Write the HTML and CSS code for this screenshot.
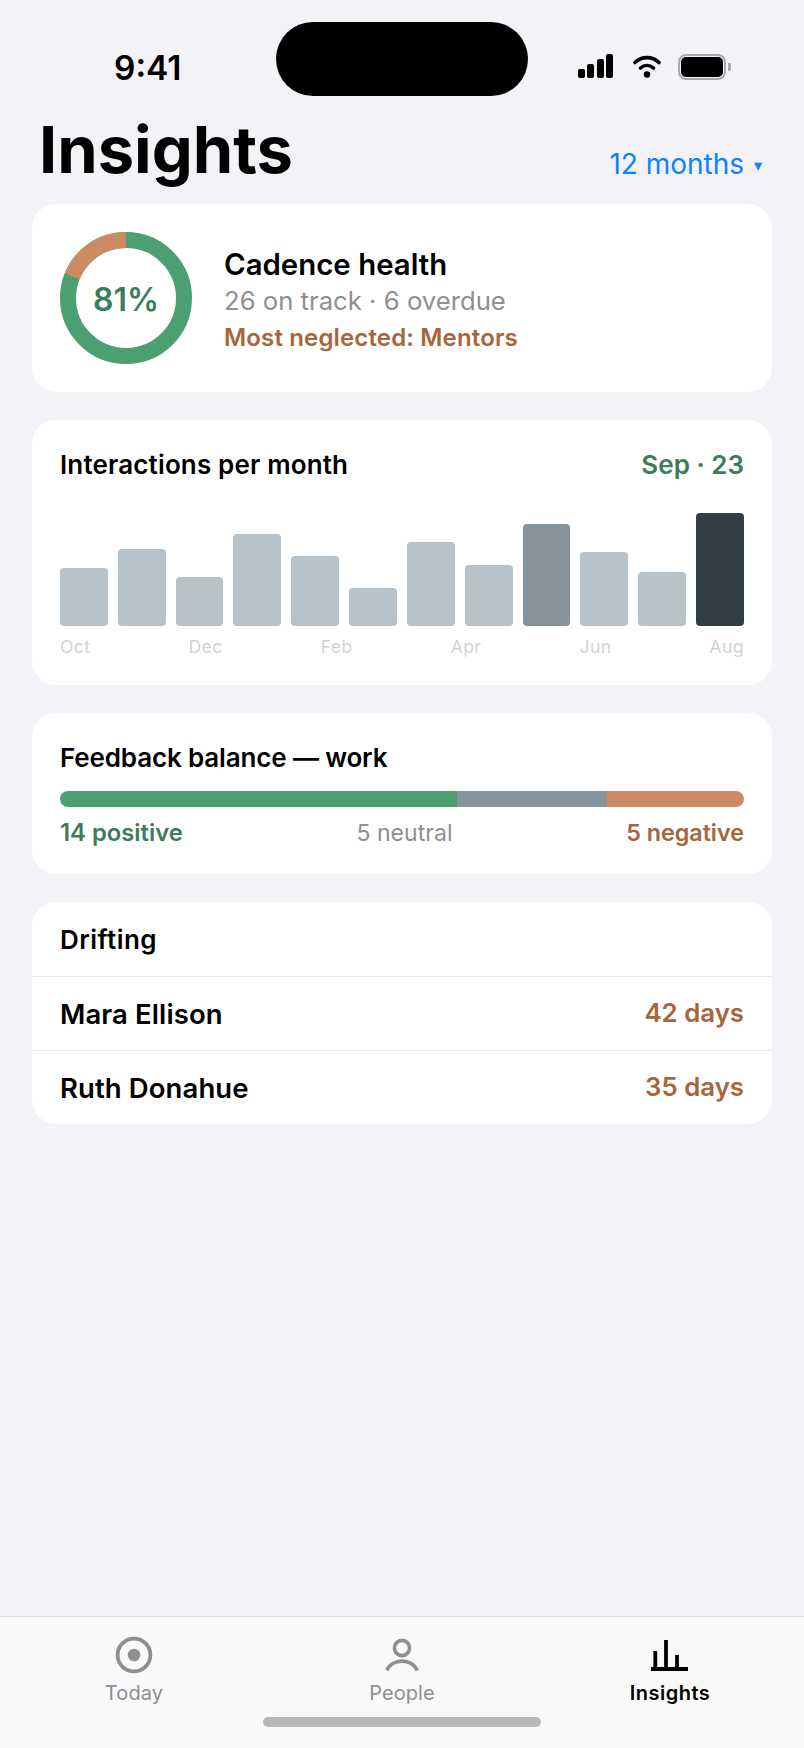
FILE: index.html
```html
<!DOCTYPE html>
<html lang="en">
<head>
    <meta charset="UTF-8">
    <title>Insights</title>
    <link rel="stylesheet" href="styles.css">
</head>
<body>
    <div class="status-bar">
        <div class="time">9:41</div>
        <div class="island"></div>
        <div class="status-icons">
            <div class="signal">
                <span class="signal-1"></span>
                <span class="signal-2"></span>
                <span class="signal-3"></span>
                <span class="signal-4"></span>
            </div>
            <svg class="wifi" width="28" height="24" viewBox="0 0 28 24">
                <path d="M2 8.5C9 2 19 2 26 8.5" fill="none" stroke="#000" stroke-width="3.6" stroke-linecap="round"/>
                <path d="M7.5 14C11.5 10.6 16.5 10.6 20.5 14" fill="none" stroke="#000" stroke-width="3.6" stroke-linecap="round"/>
                <circle cx="14" cy="20.5" r="3.2" fill="#000"/>
            </svg>
            <div class="battery">
                <div class="battery-body"><div class="battery-level"></div></div>
                <div class="battery-nub"></div>
            </div>
        </div>
    </div>

    <div class="page-header">
        <h1>Insights</h1>
        <div class="range">12 months <span class="range-arrow">▾</span></div>
    </div>

    <main class="cards">
        <section class="card health">
            <div class="donut">
                <svg width="132" height="132" viewBox="0 0 132 132">
                    <circle cx="66" cy="66" r="58" fill="none" stroke="#4c9f70" stroke-width="16"/>
                    <circle cx="66" cy="66" r="58" fill="none" stroke="#cc8b62" stroke-width="16" stroke-dasharray="69.2 295.2" stroke-dashoffset="69.2" transform="rotate(-90 66 66)"/>
                </svg>
                <div class="donut-label">81%</div>
            </div>
            <div class="health-text">
                <div class="health-title">Cadence health</div>
                <div class="health-sub">26 on track · 6 overdue</div>
                <div class="health-note">Most neglected: Mentors</div>
            </div>
        </section>

        <section class="card chart">
            <div class="card-head">
                <div class="card-title title-chart">Interactions per month</div>
                <div class="chart-now">Sep · 23</div>
            </div>
            <div class="bars">
                <div class="bar" style="height: 58px"></div>
                <div class="bar" style="height: 77px"></div>
                <div class="bar" style="height: 49px"></div>
                <div class="bar" style="height: 92px"></div>
                <div class="bar" style="height: 70px"></div>
                <div class="bar" style="height: 38px"></div>
                <div class="bar" style="height: 84px"></div>
                <div class="bar" style="height: 61px"></div>
                <div class="bar bar-mid" style="height: 102px"></div>
                <div class="bar" style="height: 74px"></div>
                <div class="bar" style="height: 54px"></div>
                <div class="bar bar-dark" style="height: 113px"></div>
            </div>
            <div class="months">
                <span>Oct</span>
                <span>Dec</span>
                <span>Feb</span>
                <span>Apr</span>
                <span>Jun</span>
                <span>Aug</span>
            </div>
        </section>

        <section class="card balance">
            <div class="card-title title-balance">Feedback balance — work</div>
            <div class="balance-bar">
                <div class="seg-positive" style="width: 397px"></div>
                <div class="seg-neutral" style="width: 150px"></div>
                <div class="seg-negative" style="width: 137px"></div>
            </div>
            <div class="balance-labels">
                <span class="label-positive">14 positive</span>
                <span class="label-neutral">5 neutral</span>
                <span class="label-negative">5 negative</span>
            </div>
        </section>

        <section class="card drifting">
            <div class="drifting-head card-title title-drifting">Drifting</div>
            <div class="drifting-row">
                <span class="drifting-name">Mara Ellison</span>
                <span class="drifting-days">42 days</span>
            </div>
            <div class="drifting-row">
                <span class="drifting-name">Ruth Donahue</span>
                <span class="drifting-days">35 days</span>
            </div>
        </section>
    </main>

    <footer class="tab-bar">
        <div class="tabs">
            <div class="tab">
                <svg width="40" height="40" viewBox="0 0 40 40">
                    <circle cx="20" cy="20" r="16.4" fill="none" stroke="#8e8e93" stroke-width="3.8"/>
                    <circle cx="20" cy="20" r="6.3" fill="#8e8e93"/>
                </svg>
                <span>Today</span>
            </div>
            <div class="tab">
                <svg width="40" height="40" viewBox="0 0 40 40">
                    <circle cx="20" cy="13" r="7.6" fill="none" stroke="#8e8e93" stroke-width="3.6"/>
                    <path d="M5 35.5C9 23 31 23 35 35.5" fill="none" stroke="#8e8e93" stroke-width="3.6"/>
                </svg>
                <span>People</span>
            </div>
            <div class="tab tab-active">
                <svg width="40" height="40" viewBox="0 0 40 40">
                    <path d="M1 34H38M5.3 34V16M16 34V5M27 34V20" fill="none" stroke="#000" stroke-width="3.8"/>
                </svg>
                <span>Insights</span>
            </div>
        </div>
        <div class="home-bar"></div>
    </footer>
</body>
</html>
```

FILE: styles.css
```css
* {
    margin: 0;
    padding: 0;
    box-sizing: border-box;
}

body {
    width: 804px;
    height: 1748px;
    display: flex;
    flex-direction: column;
    font-family: 'Inter', 'Liberation Sans', sans-serif;
    background-color: #f2f2f7;
    color: #000;
    overflow: hidden;
}

/* status bar */
.status-bar {
    height: 96px;
    padding-top: 22px;
    display: flex;
}

.time {
    width: 276px;
    padding-top: 24px;
    padding-left: 114px;
    font-size: 33.5px;
    line-height: 44px;
    font-weight: 600;
}

.island {
    width: 252px;
    height: 74px;
    border-radius: 37px;
    background-color: #000;
}

.status-icons {
    display: flex;
    align-items: flex-start;
    padding-left: 50px;
    padding-top: 32px;
}

.signal {
    display: flex;
    align-items: flex-end;
    gap: 2.4px;
    height: 24px;
    margin-right: 20px;
}

.signal span {
    display: block;
    width: 7px;
    border-radius: 2px;
    background-color: #000;
}

.signal-1 { height: 9px; }
.signal-2 { height: 14px; }
.signal-3 { height: 19px; }
.signal-4 { height: 24px; }

.wifi {
    margin-right: 17px;
}

.battery {
    display: flex;
    align-items: center;
    height: 26px;
}

.battery-body {
    width: 48px;
    height: 26px;
    padding: 1px;
    border: 2.5px solid #a6a9ac;
    border-radius: 8px;
}

.battery-level {
    height: 100%;
    border-radius: 5px;
    background-color: #000;
}

.battery-nub {
    width: 3px;
    height: 8px;
    margin-left: 2px;
    border-radius: 0 2px 2px 0;
    background-color: #a6a9ac;
}

/* header */
.page-header {
    height: 108px;
    padding: 16px 42px 0 39px;
    display: flex;
    justify-content: space-between;
    align-items: flex-start;
}

h1 {
    font-size: 65px;
    line-height: 76px;
    font-weight: 700;
}

.range {
    padding-top: 35px;
    font-size: 28px;
    color: #0a84ff;
}

.range-arrow {
    font-size: 16px;
    margin-left: 2px;
    vertical-align: 3px;
}

/* cards */
.cards {
    padding: 0 32px;
    display: flex;
    flex-direction: column;
    gap: 28px;
}

.card {
    background-color: #fff;
    border-radius: 24px;
}

.card-title {
    font-size: 26px;
    line-height: 32px;
    font-weight: 600;
}

.title-chart {
    letter-spacing: 0.15px;
}

.title-balance {
    letter-spacing: -0.15px;
}

.title-drifting {
    letter-spacing: 0.45px;
}

.health {
    height: 188px;
    padding: 0 28px;
    display: flex;
    align-items: center;
    gap: 32px;
}

.donut {
    display: grid;
    width: 132px;
    height: 132px;
}

.donut svg,
.donut-label {
    grid-area: 1 / 1;
}

.donut-label {
    display: flex;
    align-items: center;
    justify-content: center;
    padding-top: 2px;
    font-size: 32px;
    font-weight: 600;
    color: #3a7d5a;
}

.health-text {
    padding-top: 4px;
}

.health-title {
    font-size: 29.4px;
    line-height: 40px;
    font-weight: 600;
}

.health-sub {
    font-size: 25.7px;
    line-height: 32px;
    color: #8e8e93;
}

.health-note {
    padding-top: 3px;
    font-size: 24px;
    line-height: 36px;
    font-weight: 600;
    letter-spacing: 0.15px;
    color: #a8643a;
}

.chart {
    height: 265px;
    padding: 29px 28px 28px;
}

.card-head {
    display: flex;
    justify-content: space-between;
    align-items: baseline;
}

.chart-now {
    font-size: 26px;
    line-height: 32px;
    font-weight: 600;
    color: #3a7d5a;
}

.bars {
    height: 113px;
    margin-top: 32px;
    display: flex;
    align-items: flex-end;
    gap: 10px;
}

.bar {
    flex: 1;
    border-radius: 4px;
    background-color: #b6c2c8;
}

.bar-mid {
    background-color: #86939b;
}

.bar-dark {
    background-color: #323f47;
}

.months {
    margin-top: 10px;
    display: flex;
    justify-content: space-between;
    font-size: 17.5px;
    line-height: 22px;
    letter-spacing: 0.4px;
    color: #d1d1d6;
}

.balance {
    height: 161px;
    padding: 29px 28px 28px;
}

.balance-bar {
    height: 16px;
    margin-top: 17px;
    display: flex;
    border-radius: 8px;
    overflow: hidden;
}

.seg-positive { background-color: #4c9f70; }
.seg-neutral { background-color: #86939b; }
.seg-negative { background-color: #cc8b62; }

.balance-labels {
    margin-top: 10px;
    display: flex;
    justify-content: space-between;
    font-size: 23px;
    line-height: 32px;
}

.label-positive {
    font-size: 23.8px;
    font-weight: 600;
    color: #3a7d5a;
}

.label-neutral {
    letter-spacing: 0.05px;
    color: #8e8e93;
}

.label-negative {
    font-size: 23.3px;
    font-weight: 600;
    color: #a8643a;
}

.drifting-head {
    height: 74px;
    padding: 1px 28px 0;
    display: flex;
    align-items: center;
}

.drifting-row {
    height: 74px;
    padding: 0 28px;
    display: flex;
    justify-content: space-between;
    align-items: center;
    border-top: 1px solid #e5e5ea;
}

.drifting-name {
    font-size: 27.5px;
    font-weight: 600;
    letter-spacing: 0.1px;
}

.drifting-days {
    margin-bottom: 2px;
    font-size: 25.8px;
    font-weight: 600;
    color: #a8643a;
}

/* tab bar */
.tab-bar {
    margin-top: auto;
    height: 132px;
    border-top: 1px solid #e2e2e8;
    background-color: #f9f9f9;
}

.tabs {
    display: flex;
    padding-top: 18px;
}

.tab {
    width: 268px;
    display: flex;
    flex-direction: column;
    align-items: center;
    gap: 5px;
    font-size: 20px;
    line-height: 26px;
    letter-spacing: 0.1px;
    color: #8e8e93;
}

.tab-active {
    color: #000;
    font-weight: 600;
    letter-spacing: 0.5px;
}

.home-bar {
    width: 278px;
    height: 10px;
    margin: 11px auto 0;
    border-radius: 5px;
    background-color: #b7b8b7;
}
```
